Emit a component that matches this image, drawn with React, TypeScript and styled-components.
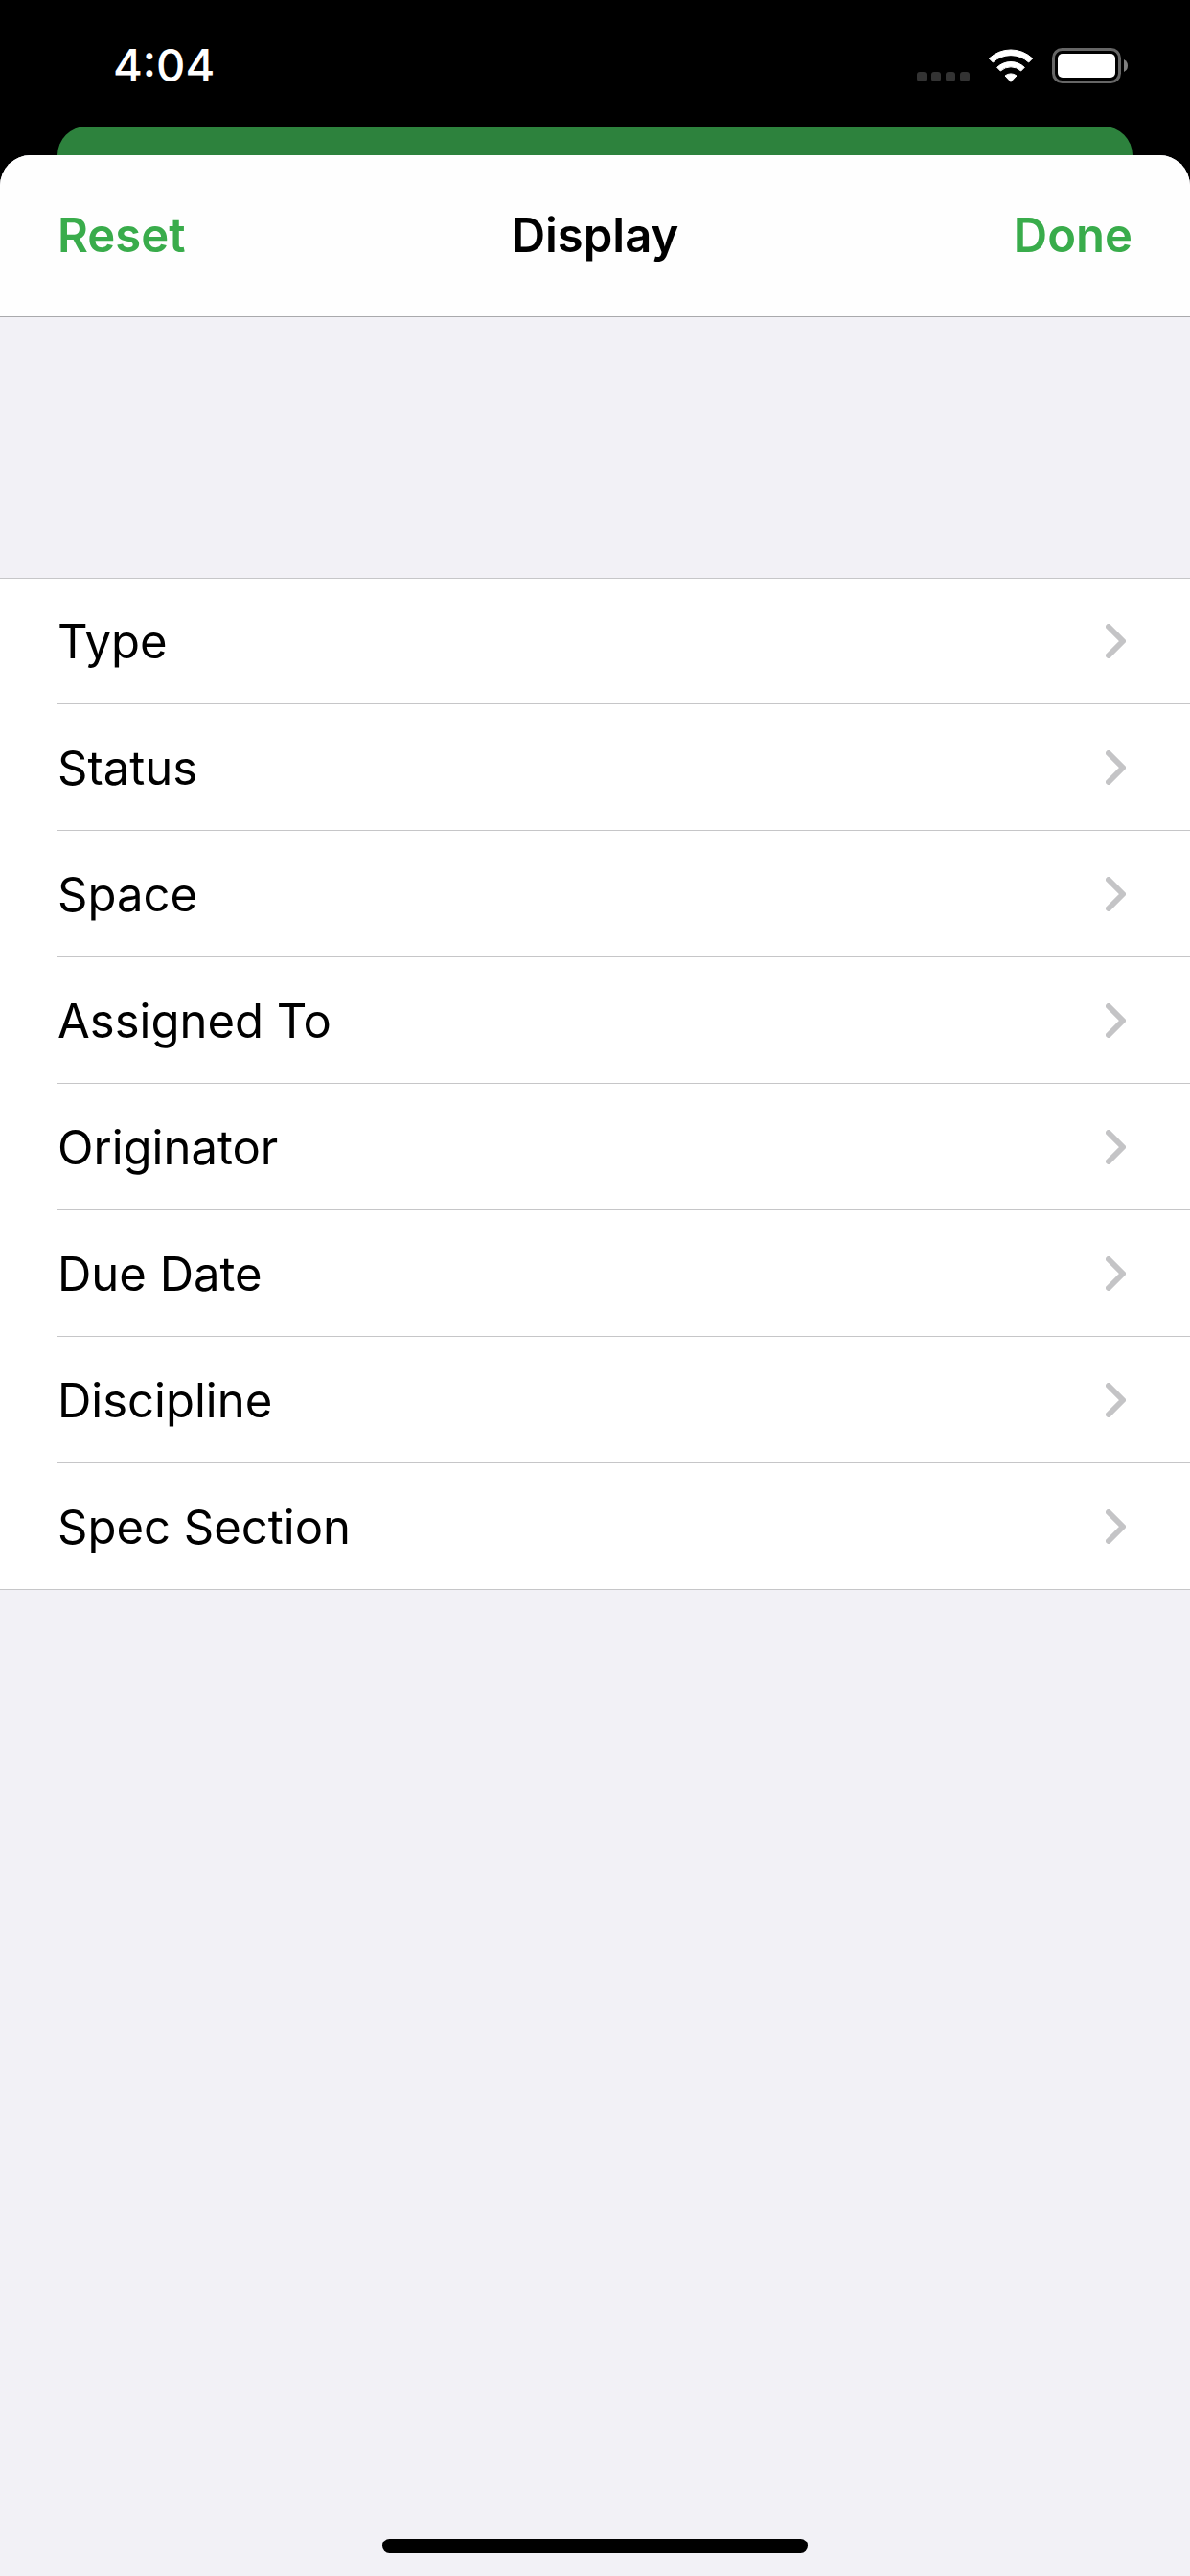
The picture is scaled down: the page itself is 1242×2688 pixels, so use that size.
import React from "react";
import styled, { createGlobalStyle } from "styled-components";

const GlobalStyle = createGlobalStyle`
  *, *::before, *::after {
    box-sizing: border-box;
  }
  body {
    margin: 0;
    background: #000;
    font-family: Inter, "Liberation Sans", sans-serif;
  }
  button {
    font: inherit;
    color: inherit;
    margin: 0;
    padding: 0;
    border: 0;
    background: none;
    cursor: pointer;
  }
`;

const Screen = styled.div`
  display: flex;
  flex-direction: column;
  min-height: 100vh;
  background: #000;
`;

const StatusBar = styled.div`
  display: flex;
  align-items: center;
  justify-content: space-between;
  height: 132px;
  padding: 4px 65px 0 118px;
  color: #fff;
`;

const Time = styled.time`
  font-size: 47px;
  font-weight: 500;
  line-height: 56px;
`;

const Indicators = styled.div`
  display: flex;
  align-items: center;
  gap: 19px;
`;

const SignalDots = styled.div`
  display: flex;
  align-self: flex-end;
  gap: 5px;
  padding-bottom: 2px;
`;

const SignalDot = styled.span`
  width: 10px;
  height: 10px;
  border-radius: 3px;
  background: #333;
`;

const Icon = styled.svg`
  display: block;
  flex: none;
`;

const BackCard = styled.div`
  height: 30px;
  margin: 0 60px;
  border-radius: 30px 30px 0 0;
  background: #2d823d;
`;

const Sheet = styled.main`
  display: flex;
  flex: 1;
  flex-direction: column;
  border-radius: 32px 32px 0 0;
  overflow: hidden;
  background: #f2f1f6;
`;

const Header = styled.header`
  display: grid;
  grid-template-columns: 1fr auto 1fr;
  align-items: center;
  height: 169px;
  padding: 0 60px;
  border-bottom: 1px solid #a9a9ac;
  background: #fefefe;
`;

const Title = styled.h1`
  margin: 0;
  color: #000;
  font-size: 49px;
  font-weight: 600;
  line-height: 60px;
`;

const HeaderButton = styled.button<{ $align: "start" | "end" }>`
  justify-self: ${({ $align }) => $align};
  color: #39ac4b;
  font-size: 49px;
  font-weight: 600;
  line-height: 60px;
`;

const OptionList = styled.ul`
  margin: 272px 0 0;
  padding: 0;
  list-style: none;
  background: #fff;
  box-shadow: inset 0 1px #c6c6c8, inset 0 -1px #c6c6c8;
`;

const OptionItem = styled.li`
  margin-left: 60px;

  &:not(:last-child) {
    border-bottom: 1px solid #c6c6c8;
  }
`;

const OptionButton = styled.button`
  display: flex;
  align-items: center;
  justify-content: space-between;
  width: 100%;
  height: 131px;
  padding-right: 67px;
  color: #000;
  text-align: left;

  ${OptionItem}:last-child & {
    height: 132px;
  }
`;

const OptionLabel = styled.span`
  padding-top: 2px;
  font-size: 49px;
  line-height: 60px;
`;

const HomeIndicator = styled.div`
  width: 36%;
  max-width: 444px;
  height: 15px;
  margin: auto auto 24px;
  border-radius: 8px;
  background: #000;
`;

const WifiIcon = () => (
  <Icon width="48" height="36" viewBox="0 0 144 108" role="img" aria-label="Wi-Fi">
    <g fill="#fff" stroke="#fff" strokeWidth="3" strokeLinejoin="round">
      <path d="M4 33A99 99 0 0 1 140 33L128 45A82 82 0 0 0 16 45Z" />
      <path d="M29 61A62 62 0 0 1 115 61L104 72A47 47 0 0 0 40 72Z" />
      <path d="M54 87A29 29 0 0 1 90 87L72 106Z" />
    </g>
  </Icon>
);

const BatteryIcon = () => (
  <Icon width="79" height="37" viewBox="0 0 79 37" role="img" aria-label="Battery full">
    <rect x="1.5" y="1.5" width="69" height="34" rx="9" fill="none" stroke="#666" strokeWidth="3" />
    <rect x="6" y="6" width="60" height="25" rx="5" fill="#fff" />
    <path d="M75 12Q79 14 79 18.500Q79 23 75 25Z" fill="#808080" />
  </Icon>
);

const ChevronIcon = () => (
  <Icon width="21" height="36" viewBox="0 0 21 36" aria-hidden="true">
    <path
      d="M3 3L18 18L3 33"
      fill="none"
      stroke="#c4c4c6"
      strokeWidth="6"
      strokeLinecap="round"
      strokeLinejoin="round"
    />
  </Icon>
);

const options = [
  "Type",
  "Status",
  "Space",
  "Assigned To",
  "Originator",
  "Due Date",
  "Discipline",
  "Spec Section",
];

export default function App() {
  return (
    <>
      <GlobalStyle />
      <Screen>
        <StatusBar>
          <Time>4:04</Time>
          <Indicators>
            <SignalDots>
              {[0, 1, 2, 3].map((dot) => (
                <SignalDot key={dot} />
              ))}
            </SignalDots>
            <WifiIcon />
            <BatteryIcon />
          </Indicators>
        </StatusBar>
        <BackCard />
        <Sheet>
          <Header>
            <HeaderButton type="button" $align="start">
              Reset
            </HeaderButton>
            <Title>Display</Title>
            <HeaderButton type="button" $align="end">
              Done
            </HeaderButton>
          </Header>
          <OptionList>
            {options.map((option) => (
              <OptionItem key={option}>
                <OptionButton type="button">
                  <OptionLabel>{option}</OptionLabel>
                  <ChevronIcon />
                </OptionButton>
              </OptionItem>
            ))}
          </OptionList>
          <HomeIndicator />
        </Sheet>
      </Screen>
    </>
  );
}
